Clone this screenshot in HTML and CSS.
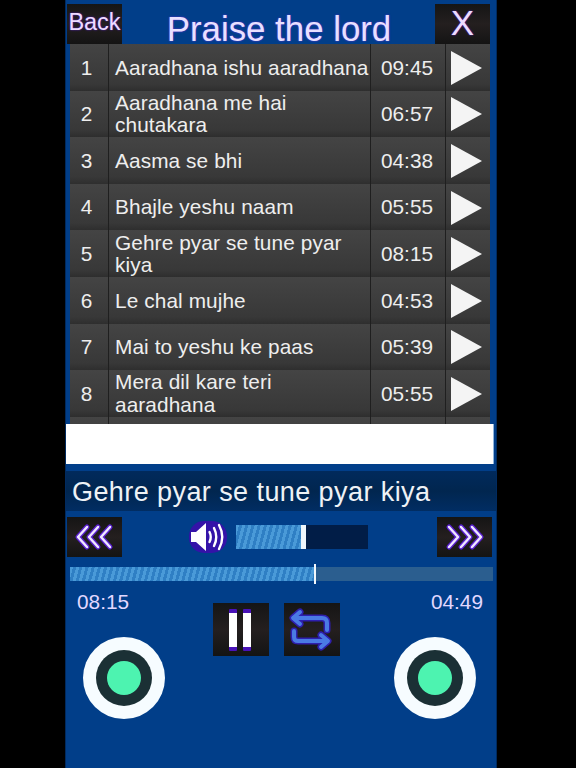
FILE: index.html
```html
<!DOCTYPE html>
<html lang="en">
<head>
<meta charset="utf-8">
<title>Praise the lord</title>
<link rel="stylesheet" href="styles.css">
</head>
<body>
<main class="app">
  <header class="header">
    <button class="btn back">Back</button>
    <h1 class="title">Praise the lord</h1>
    <button class="btn close">X</button>
  </header>
  <section class="list">
    <div class="row"><span class="num">1</span><span class="name">Aaradhana ishu aaradhana</span><span class="dur">09:45</span><span class="play"><i class="tri"></i></span></div>
    <div class="row"><span class="num">2</span><span class="name">Aaradhana me hai chutakara</span><span class="dur">06:57</span><span class="play"><i class="tri"></i></span></div>
    <div class="row"><span class="num">3</span><span class="name">Aasma se bhi</span><span class="dur">04:38</span><span class="play"><i class="tri"></i></span></div>
    <div class="row"><span class="num">4</span><span class="name">Bhajle yeshu naam</span><span class="dur">05:55</span><span class="play"><i class="tri"></i></span></div>
    <div class="row"><span class="num">5</span><span class="name">Gehre pyar se tune pyar kiya</span><span class="dur">08:15</span><span class="play"><i class="tri"></i></span></div>
    <div class="row"><span class="num">6</span><span class="name">Le chal mujhe</span><span class="dur">04:53</span><span class="play"><i class="tri"></i></span></div>
    <div class="row"><span class="num">7</span><span class="name">Mai to yeshu ke paas</span><span class="dur">05:39</span><span class="play"><i class="tri"></i></span></div>
    <div class="row"><span class="num">8</span><span class="name">Mera dil kare teri aaradhana</span><span class="dur">05:55</span><span class="play"><i class="tri"></i></span></div>
    <div class="row"><span class="num"></span><span class="name"></span><span class="dur"></span><span class="play"></span></div>
  </section>
  <div class="blank"></div>
  <div class="now">Gehre pyar se tune pyar kiya</div>
  <div class="transport">
    <button class="btn seek" aria-label="Previous">
      <svg class="chev" viewBox="0 0 55 40" aria-hidden="true">
        <g fill="none" stroke-linecap="round" stroke-linejoin="round">
          <path class="chev-glow" d="M20 10l-9 10 9 10M31 10l-9 10 9 10M43 10l-9 10 9 10"/>
          <path class="chev-line" d="M20 10l-9 10 9 10M31 10l-9 10 9 10M43 10l-9 10 9 10"/>
        </g>
      </svg>
    </button>
    <div class="volume">
      <svg class="speaker" viewBox="0 0 38 32" aria-hidden="true">
        <rect x="0" y="0" width="38" height="32" rx="15" fill="#3413a8"/>
        <path d="M2 11h5l10-9v28L7 21H2z" fill="#fff"/>
        <path d="M20.500 11q2.500 5 0 10M25 7q4.500 9 0 18M30 4q6.500 12 0 24" fill="none" stroke="#fff" stroke-width="2.400" stroke-linecap="round"/>
      </svg>
      <div class="vol-bar"><div class="fill vol-fill"></div><div class="vol-knob"></div></div>
    </div>
    <button class="btn seek" aria-label="Next">
      <svg class="chev" viewBox="0 0 55 40" aria-hidden="true">
        <g fill="none" stroke-linecap="round" stroke-linejoin="round">
          <path class="chev-glow" d="M12 10l9 10-9 10M24 10l9 10-9 10M35 10l9 10-9 10"/>
          <path class="chev-line" d="M12 10l9 10-9 10M24 10l9 10-9 10M35 10l9 10-9 10"/>
        </g>
      </svg>
    </button>
  </div>
  <div class="progress"><div class="fill prog-fill"></div><div class="prog-knob"></div></div>
  <div class="bottom">
    <div class="side">
      <span class="time">08:15</span>
      <div class="knob"><div class="knob-in"></div></div>
    </div>
    <div class="center">
      <button class="btn square" aria-label="Pause">
        <svg class="ico" viewBox="0 0 56 52" aria-hidden="true">
          <rect x="16" y="5" width="8" height="42" rx="1" fill="#4a12b8"/>
          <rect x="30" y="5" width="8" height="42" rx="1" fill="#4a12b8"/>
          <rect x="16" y="9" width="8" height="34" fill="#fff"/>
          <rect x="30" y="9" width="8" height="34" fill="#fff"/>
        </svg>
      </button>
      <button class="btn square" aria-label="Repeat">
        <svg class="ico" viewBox="0 0 56 52" aria-hidden="true">
          <g fill="none" stroke-linecap="round" stroke-linejoin="round">
            <g stroke="#2e1fae" stroke-width="7">
              <path d="M43 26v-7q0-5-5-5H10M16 8l-7 6 7 6"/>
              <path d="M10 27v6q0 4 4 4h29M37 31l7 6-7 6"/>
            </g>
            <g stroke="#4a7ae4" stroke-width="4">
              <path d="M43 26v-7q0-5-5-5H10M16 8l-7 6 7 6"/>
              <path d="M10 27v6q0 4 4 4h29M37 31l7 6-7 6"/>
            </g>
          </g>
        </svg>
      </button>
    </div>
    <div class="side side-right">
      <span class="time">04:49</span>
      <div class="knob"><div class="knob-in"></div></div>
    </div>
  </div>
</main>
</body>
</html>
```
FILE: styles.css
```css
* { box-sizing: border-box; }
html, body { margin: 0; height: 100%; background: #000; overflow: hidden; }
body { font-family: "Liberation Sans", Arial, sans-serif; }
.app {
  width: 432px; height: 768px; margin-left: 65px;
  background: #013e89;
  border-left: 1px solid #012a5e; border-right: 1px solid #012a5e;
  display: flex; flex-direction: column;
}
.btn {
  border: 0; padding: 0; margin: 0; font-family: inherit; color: #eddcff;
  background: linear-gradient(#151515, #241f1f 50%, #141414);
  display: flex; align-items: center; justify-content: center;
}
.header { height: 44px; padding: 4px 6px 0 1px; display: flex; align-items: stretch; }
.back { width: 55px; height: 40px; font-size: 23.500px; padding-bottom: 4px; text-shadow: 0 0 2px #5a20d0; }
.close { width: 55px; height: 40px; font-size: 35px; padding-bottom: 3px; text-shadow: 0 0 2px #5a20d0; }
.title {
  flex: 1; margin: 0; font-weight: 400; font-size: 34.800px; color: #e8e0ff; text-align: center;
  line-height: 50px; padding-left: 1px; text-shadow: 0 0 2px #6a30e0; white-space: nowrap;
}
.list { height: 380px; margin: 0 6px 0 4px; overflow: hidden; background: #333; flex: none; }
.row {
  height: 46.600px;
  display: grid; grid-template-columns: 39px 262px 75px 44px;
  color: #eee; font-size: 20.800px; line-height: 22.500px;
}
.row > span {
  display: flex; align-items: center; padding-top: 1px;
  background: linear-gradient(#444, #383838 85%, #2e2e2e);
  border-right: 1px solid #1f1f1f;
}
.row > span:last-child { border-right: 0; }
.num { justify-content: center; padding-right: 5px; }
.name { padding-left: 6px; letter-spacing: 0.1px; }
.dur { justify-content: center; padding-right: 2px; }
.play { padding-left: 5px; padding-top: 2px; }
.tri {
  display: block; width: 0; height: 0;
  border-left: 31px solid #f4f4f4; border-top: 17px solid transparent; border-bottom: 17px solid transparent;
}
.blank { height: 40px; margin: 0 2px 0 0; background: #fff; flex: none; border-right: 1px solid #8fb4dc; }
.now {
  height: 40px; margin-top: 7px; padding-left: 6px; flex: none;
  background: linear-gradient(#012a5c, #01264f 50%, #012d63);
  color: #eef2f6; font-size: 27px; line-height: 42px; letter-spacing: 0.42px;
}
.transport { height: 40px; margin-top: 6px; padding: 0 4px 0 1px; display: flex; justify-content: space-between; align-items: center; flex: none; }
.seek { width: 55px; height: 40px; }
.chev { width: 55px; height: 40px; display: block; }
.chev-glow { stroke: #5a20d0; stroke-width: 5; }
.chev-line { stroke: #efe6ff; stroke-width: 2.500; }
.volume { display: flex; align-items: center; gap: 9px; margin-left: -2px; }
.speaker { width: 38px; height: 32px; display: block; }
.vol-bar { width: 132px; height: 24px; background: #011d47; display: flex; }
.fill {
  height: 100%;
  background: repeating-linear-gradient(105deg, #4a9ad8 0 3px, #2f7fc4 3px 6px);
}
.vol-fill { width: 65px; }
.vol-knob { width: 5px; height: 24px; background: #eef6fc; }
.progress { height: 14px; margin: 10px 3px 0 4px; background: #2b5e8f; display: flex; align-items: stretch; flex: none; }
.prog-fill { width: 244px; }
.prog-knob { width: 2px; height: 20px; margin-top: -3px; background: #f2f7fb; }
.bottom { display: flex; justify-content: space-between; flex: 1; padding: 9px 0 0 17px; }
.side { width: 84px; display: flex; flex-direction: column; align-items: flex-start; }
.side-right { margin-right: 20px; align-items: flex-end; }
.time { font-size: 20.800px; line-height: 24px; color: #e2d8ff; margin-left: -6px; }
.side-right .time { margin: 0 -7px 0 0; }
.knob {
  width: 82px; height: 82px; border-radius: 50%; background: #f6fcff; margin-top: 23px;
  display: flex; align-items: center; justify-content: center;
}
.knob-in { width: 34px; height: 34px; border-radius: 50%; background: #4df3b0; box-shadow: 0 0 0 11px #1b3035; }
.center { display: flex; gap: 15px; margin: 13px 0 0 -7px; align-items: flex-start; }
.square { width: 56px; height: 53px; }
.ico { width: 56px; height: 52px; display: block; }
```
